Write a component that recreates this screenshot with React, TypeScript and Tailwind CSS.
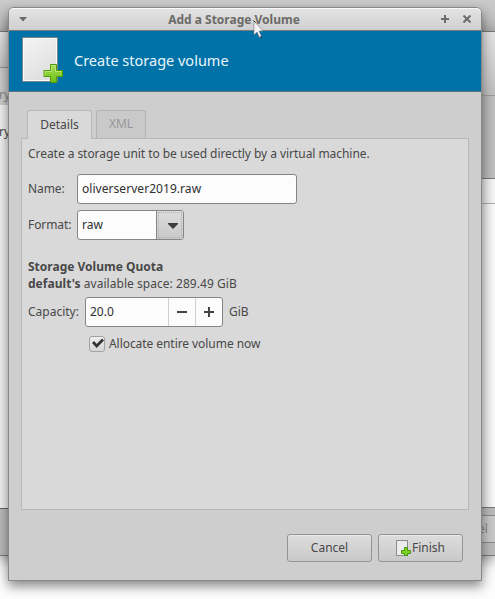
import React from 'react';

function AddPageIcon({ className }: { className: string }) {
  return (
    <svg className={className} viewBox="0 0 42 48" fill="none">
      <defs>
        <linearGradient id="sheet" x1="0" y1="0" x2="0.6" y2="1">
          <stop offset="0" stopColor="#f5f5f5" />
          <stop offset="1" stopColor="#dedede" />
        </linearGradient>
        <linearGradient id="plus" x1="0" y1="0" x2="0" y2="1">
          <stop offset="0" stopColor="#a5dc55" />
          <stop offset="1" stopColor="#6fc016" />
        </linearGradient>
      </defs>
      <rect x="0.5" y="0.5" width="35" height="44" fill="url(#sheet)" stroke="#77858a" />
      <rect x="1.5" y="1.5" width="33" height="42" stroke="#fbfbfb" />
      <path
        d="M28.5 27.5h6v6h6v6h-6v6h-6v-6h-6.500v-6h6.500z"
        fill="url(#plus)"
        stroke="#4e9a06"
      />
      <path d="M23 38.500v-4h6.500v-6h4v6h6" stroke="#c5ee8c" strokeOpacity="0.7" />
    </svg>
  );
}

function SmallAddPageIcon() {
  return (
    <svg className="h-4 w-[15px]" viewBox="0 0 15 16" fill="none">
      <rect x="0.5" y="0.5" width="11" height="15" fill="#ececec" stroke="#8c8c8c" />
      <path d="M8.500 7.500h3v3h3v3h-3v2h-3v-2h-3v-3h3z" fill="#7ed321" stroke="#4b9410" />
    </svg>
  );
}

function BackgroundWindow() {
  return (
    <div className="absolute inset-x-0 top-[31px] flex h-[525px] justify-between overflow-hidden border-y border-[#777] bg-[#bdbdbd] text-[12px] shadow-[0_4px_14px_rgba(0,0,0,0.45)]">
      <div className="flex w-[9px] flex-col">
        <div className="h-9 border-b border-[#8f8f8f] bg-gradient-to-b from-[#e4e4e4] to-[#c0c0c0]" />
        <div className="flex h-[37px] items-end overflow-hidden bg-[#cacaca] text-[#858585]">
          <span className="mb-px -ml-[1px] leading-[18px]">ry</span>
        </div>
        <div className="h-[404px] overflow-hidden border-b border-[#666] bg-[#f0f0f0] pt-[18px] text-[#444]">
          <span className="-ml-[1px] block leading-[18px]">ry</span>
        </div>
        <div className="flex-1 bg-[#b9b9b9]" />
      </div>
      <div className="flex w-[14px] flex-col">
        <div className="h-16 border-b border-[#9b9b9b] bg-gradient-to-b from-[#e2e2e2] to-[#bebebe]" />
        <div className="h-[83px] border-b border-[#777] bg-gradient-to-r from-[#b5b5b5] to-[#bebebe]" />
        <div className="h-[25px] border-b border-[#aaa] bg-gradient-to-r from-[#e3e3e3] to-[#f6f6f6]" />
        <div className="h-[304px] border-b border-[#777] bg-gradient-to-r from-[#e5e5e5] to-[#fafafa]" />
        <div className="flex-1 bg-[#b9b9b9] pt-[7px]">
          <div className="h-7 border-y border-[#888] bg-[#c7c7c7] text-[#888]">
            <span className="-ml-[3px] block leading-[25px]">el</span>
          </div>
        </div>
      </div>
    </div>
  );
}

function TitleBar() {
  return (
    <div className="relative flex h-[23px] items-center justify-between rounded-t-[5px] border-b border-[#777] bg-gradient-to-b from-[#e4e4e4] to-[#cfcfcf] pr-[10px] pl-[10px] shadow-[inset_0_1px_#f8f8f8]">
      <svg className="h-[5px] w-2" viewBox="0 0 8 5">
        <path d="M0 0h8L4 4.5z" fill="#686868" />
      </svg>
      <span className="absolute inset-x-0 top-0 pr-[22px] text-center text-[12px] leading-[23px] font-bold text-[#6b6b67]">
        Add a Storage Volume
      </span>
      <div className="flex items-center gap-[14px]">
        <svg className="size-2" viewBox="0 0 8 8">
          <path d="M4 0v8M0 4h8" stroke="#6c6c6c" strokeWidth="2" />
        </svg>
        <svg className="size-2" viewBox="0 0 8 8">
          <path d="M.5.5l7 7M7.5.5l-7 7" stroke="#6c6c6c" strokeWidth="2" />
        </svg>
      </div>
    </div>
  );
}

const button =
  'flex h-7 w-[85px] items-center justify-center rounded-[3px] border border-[#949494] bg-gradient-to-b from-[#dddddd] to-[#c9c9c9] pb-px shadow-[inset_0_1px_#e9e9e9]';

export default function App() {
  return (
    <div className="relative h-[599px] w-[495px] overflow-hidden bg-[#fcfcfc] font-['Noto_Sans',sans-serif] text-[12px] leading-[17px] text-[#484848]">
      <div className="h-[31px] bg-gradient-to-b from-[#cbcbcb] to-[#b7b7b7]" />
      <BackgroundWindow />
      <div className="absolute top-[7px] left-2 flex h-[574px] w-[474px] flex-col rounded-t-[6px] border border-[#888] bg-[#cecece] shadow-[0_5px_12px_rgba(0,0,0,0.48)]">
        <TitleBar />
        <div className="flex h-[61px] shrink-0 border-b border-[#5c7581] bg-[#0072a8] pt-[6px] pl-[13px]">
          <AddPageIcon className="h-12 w-[42px]" />
          <h1 className="ml-[10px] pt-[13px] text-[14.5px] leading-5 text-[#eaf5fa]">
            Create storage volume
          </h1>
        </div>
        <div className="mt-[18px] flex h-[28px] shrink-0 items-end gap-1 pl-[18px]">
          <div className="relative z-10 -mb-px flex h-[29px] w-[65px] items-center justify-center rounded-t-[3px] border border-b-0 border-[#b7b7b7] bg-[#d9d9d9] pb-px">
            Details
          </div>
          <div className="flex h-[28px] w-[50px] items-center justify-center rounded-t-[3px] border border-b-0 border-[#b4b4b4] bg-[#c9c9c9] pb-[2px] text-[#989898]">
            XML
          </div>
        </div>
        <div className="mx-3 flex h-[372px] shrink-0 flex-col border border-[#b7b7b7] bg-[#d9d9d9] pt-[6px] pl-[6px]">
          <p className="tracking-[-0.05px]">
            Create a storage unit to be used directly by a virtual machine.
          </p>
          <div className="mt-3 flex h-[30px] items-center">
            <span className="w-[49px] pb-px tracking-[-0.1px]">Name:</span>
            <div className="flex h-[30px] w-[220px] items-center rounded-[3px] border border-[#858585] bg-[#fcfcfc] pb-px pl-1 tracking-[0.05px] text-[#303030]">
              oliverserver2019.raw
            </div>
          </div>
          <div className="mt-[6px] flex h-[30px] items-center">
            <span className="w-[49px] pb-px tracking-[-0.1px]">Format:</span>
            <div className="flex h-[30px] w-[107px] rounded-[3px] border border-[#858585] bg-[#fcfcfc] text-[#303030]">
              <div className="flex w-[78px] items-center pb-px pl-1">raw</div>
              <div className="flex flex-1 items-center justify-center rounded-r-[2px] border-l border-[#858585] bg-gradient-to-b from-[#dddddd] to-[#c8c8c8] p-px">
                <div className="flex size-full items-center justify-center border border-dotted border-[#b2b2b2]">
                  <svg className="mt-[2px] ml-[6px] h-[6px] w-[10px]" viewBox="0 0 10 6">
                    <path d="M0 0h10v1L5 6 0 1z" fill="#3c3c3c" />
                  </svg>
                </div>
              </div>
            </div>
          </div>
          <h2 className="mt-[18px] font-bold">Storage Volume Quota</h2>
          <p className="tracking-[0.04px]">
            <b>default's</b> available space: 289.49 GiB
          </p>
          <div className="mt-[5px] flex h-[30px] items-center">
            <span className="w-[57px] pb-px">Capacity:</span>
            <div className="flex h-[30px] w-[138px] rounded-[3px] border border-[#858585] bg-[#fcfcfc] text-[#303030]">
              <div className="flex w-[82px] items-center pb-px pl-1">20.0</div>
              <div className="flex w-[27px] items-center justify-center border-l border-[#cfcfcf]">
                <svg className="size-[10px]" viewBox="0 0 10 10">
                  <path d="M0 5h10" stroke="#444" strokeWidth="2" />
                </svg>
              </div>
              <div className="flex w-[27px] items-center justify-center border-l border-[#cfcfcf]">
                <svg className="size-[10px]" viewBox="0 0 10 10">
                  <path d="M0 5h10M5 0v10" stroke="#444" strokeWidth="2" />
                </svg>
              </div>
            </div>
            <span className="ml-[6px] pb-px">GiB</span>
          </div>
          <div className="mt-2 ml-[61px] flex items-center">
            <div className="flex size-4 items-center justify-center rounded-[3px] border border-[#a2a2a2] bg-gradient-to-b from-[#efefef] to-[#d5d5d5]">
              <svg className="mb-px ml-px h-[10px] w-3" viewBox="0 0 12 10">
                <path d="M1 4l3.7 4L11 1.5" fill="none" stroke="#343434" strokeWidth="2.8" />
              </svg>
            </div>
            <span className="ml-1 tracking-[-0.06px]">Allocate entire volume now</span>
          </div>
        </div>
        <div className="mt-6 mr-[18px] flex justify-end gap-[6px]">
          <div className={button}>Cancel</div>
          <div className={button}>
            <SmallAddPageIcon />
            <span className="ml-px">Finish</span>
          </div>
        </div>
      </div>
      <svg className="absolute top-[20px] left-[253px] h-[19px] w-3" viewBox="0 0 12 19">
        <path d="M1 1v14l3-3 2.500 5.500 2-1L6 11h4z" fill="#f5f5f5" stroke="#777" strokeWidth="0.6" />
        <path d="M.5.5l2 2M7 17.500l2-1" stroke="#222" />
      </svg>
    </div>
  );
}
